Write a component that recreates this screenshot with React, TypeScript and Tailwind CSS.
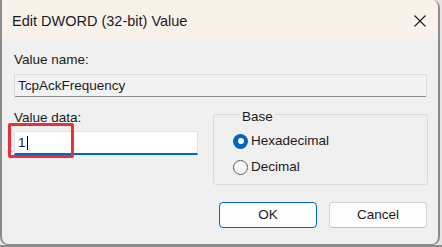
import React from "react";

export default function App() {
  const font = { fontFamily: '"Liberation Sans", Arial, sans-serif' };
  return (
    <div className="w-[442px] h-[247px] bg-[#e6e6e6] flex flex-col overflow-hidden" style={font}>
      <div className="w-[440px] h-[245px] shrink-0 flex flex-col bg-[#f0f0f0] border-l-2 border-r-2 border-b border-[#8c8c8c] rounded-tr-[8px] rounded-b-[8px] overflow-hidden text-[#1b1b1b]">
        {/* Title bar */}
        <div className="h-[39px] shrink-0 bg-[#f9f2eb] flex items-center justify-between pl-[10px] pr-[12px]">
          <span className="text-[14.5px] leading-[17px] pt-[3px]">Edit DWORD (32-bit) Value</span>
          <svg width="12" height="12" viewBox="0 0 12 12" className="mt-[3px]">
            <path d="M0.5 0.5 L11.5 11.5 M11.5 0.5 L0.5 11.5" stroke="#1b1b1b" strokeWidth="1.1" fill="none" />
          </svg>
        </div>
        {/* Body */}
        <div className="flex flex-col pl-[12px] pr-[11px] pt-[13px] text-[13.5px] leading-[16px]">
          <label className="h-[16px]">Value name:</label>
          <div className="mt-[6px] h-[23px] bg-[#f3f3f3] border border-[#dadada] border-b-[#8d8d8d] rounded-[2px] flex items-center pl-[3px]">
            TcpAckFrequency
          </div>
          <div className="mt-[10px] grid grid-cols-[184px_1fr] gap-x-[15px] items-start">
            <div className="relative pt-[3px] flex flex-col">
              <label className="h-[16px]">Value data:</label>
              <div className="mt-[5px] h-[24px] bg-white border border-[#e3e3e3] border-b-2 border-b-[#0067c0] rounded-t-[2px] flex items-center pl-[3px]">
                <span>1</span>
                <span className="ml-[1px] w-[1px] h-[14px] bg-black" />
              </div>
              <div className="absolute left-[-6px] top-[16px] w-[66px] h-[35px] border-[3px] border-[#e8303a] rounded-[2px]" />
            </div>
            <fieldset className="border border-[#dadada] rounded-[3px] pl-[19px] pb-[9px] mr-[-1px]">
              <legend className="ml-[7px] px-[2px] pt-[6px] leading-[8px]">Base</legend>
              <div className="pt-[12px] flex flex-col gap-[10px]">
                <div className="h-[16px] flex items-center gap-[3px]">
                  <span className="w-[15px] h-[15px] rounded-full bg-[#0067c0] flex items-center justify-center">
                    <span className="w-[6px] h-[6px] rounded-full bg-white" />
                  </span>
                  <span>Hexadecimal</span>
                </div>
                <div className="h-[16px] flex items-center gap-[3px]">
                  <span className="w-[15px] h-[15px] rounded-full border border-[#5c5c5c] bg-[#f6f6f6]" />
                  <span>Decimal</span>
                </div>
              </div>
            </fieldset>
          </div>
          <div className="mt-[17px] flex justify-end gap-[12px]">
            <button className="w-[98px] h-[26px] bg-[#fdfdfd] border border-[#0067c0] rounded-[4px] text-[13.5px] text-[#1b1b1b]">OK</button>
            <button className="w-[98px] h-[26px] bg-[#fdfdfd] border border-[#d3d3d3] border-b-[#bdbdbd] rounded-[4px] text-[13.5px] text-[#1b1b1b]">Cancel</button>
          </div>
        </div>
      </div>
      <div className="flex-1 bg-[#8c8c8c]" />
    </div>
  );
}
